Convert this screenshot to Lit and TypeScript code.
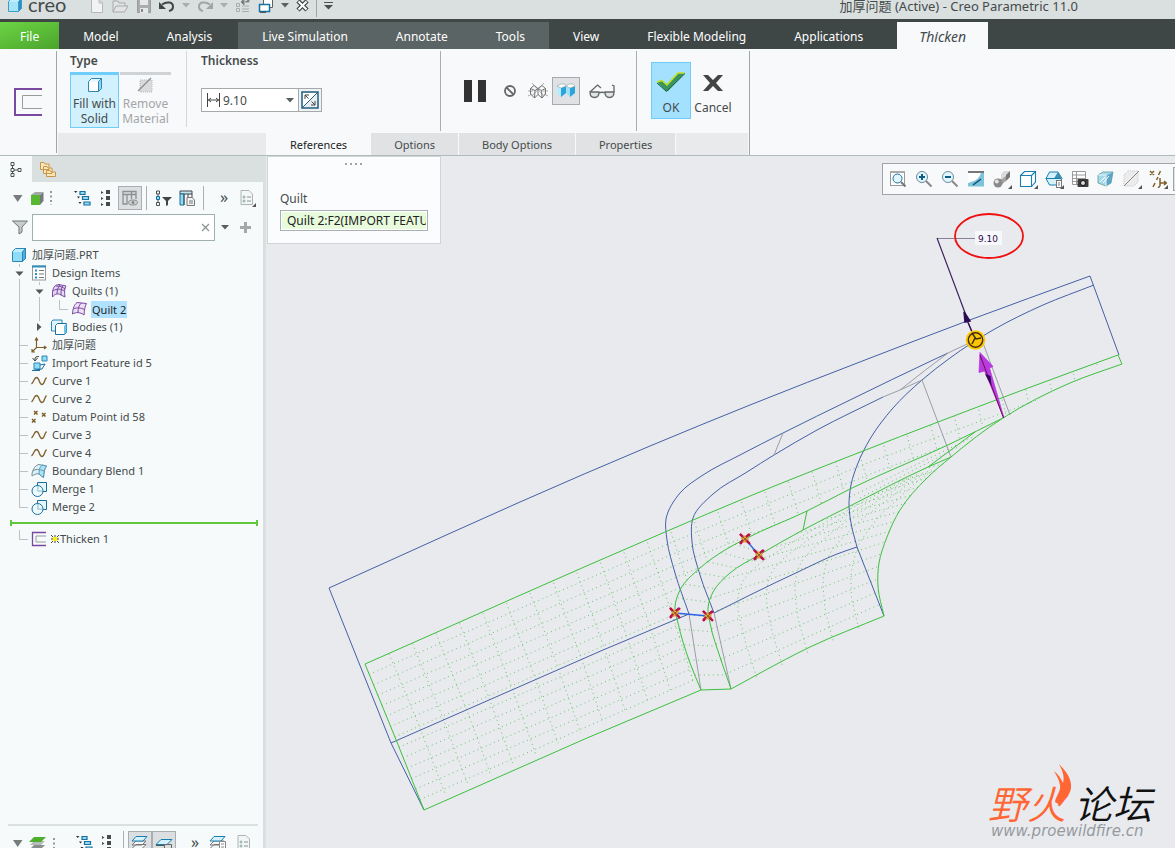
import { LitElement, html, svg, css } from "lit";
import { customElement } from "lit/decorators.js";

type Pt = [number, number];

/* ---------- geometry helpers ---------- */

const f1 = (n: number) => n.toFixed(1);

const gap = (a: Pt, b: Pt) => Math.hypot(a[0] - b[0], a[1] - b[1]);

// Spline whose tangents are weighted by segment length, so uneven spacing stays smooth.
const smooth = (pts: Pt[]): string => {
  const n = pts.length;
  const tan = pts.map((p, i): Pt => {
    const a = pts[Math.max(i - 1, 0)];
    const b = pts[Math.min(i + 1, n - 1)];
    const da = gap(a, p), db = gap(p, b);
    if (!da) return [(b[0] - p[0]) / db, (b[1] - p[1]) / db];
    if (!db) return [(p[0] - a[0]) / da, (p[1] - a[1]) / da];
    const w = db / (da + db);
    return [
      ((p[0] - a[0]) / da) * w + ((b[0] - p[0]) / db) * (1 - w),
      ((p[1] - a[1]) / da) * w + ((b[1] - p[1]) / db) * (1 - w),
    ];
  });
  let d = `M${pts[0][0]} ${pts[0][1]}`;
  for (let i = 0; i < n - 1; i++) {
    const p = pts[i], q = pts[i + 1];
    const k = gap(p, q) / 3;
    d += `C${f1(p[0] + tan[i][0] * k)} ${f1(p[1] + tan[i][1] * k)} ${f1(q[0] - tan[i + 1][0] * k)} ${f1(q[1] - tan[i + 1][1] * k)} ${f1(q[0])} ${f1(q[1])}`;
  }
  return d;
};

const along = (pts: Pt[], t: number): Pt => {
  const len = pts.slice(1).map((p, i) => gap(p, pts[i]));
  let rest = len.reduce((a, b) => a + b, 0) * t;
  for (let i = 0; i < len.length; i++) {
    if (rest <= len[i] || i === len.length - 1) {
      const k = Math.min(rest / len[i], 1);
      return [pts[i][0] + (pts[i + 1][0] - pts[i][0]) * k, pts[i][1] + (pts[i + 1][1] - pts[i][1]) * k];
    }
    rest -= len[i];
  }
  return pts[pts.length - 1];
};

const mix = (a: Pt, b: Pt, t: number): Pt => [a[0] + (b[0] - a[0]) * t, a[1] + (b[1] - a[1]) * t];

/* ---------- model curves ---------- */

const solidTop: Pt[] = [[329, 588], [380, 565], [520, 502], [650, 446], [750, 405], [865, 360], [967, 321], [1090, 276]];
const solidFront: Pt[] = [[1094, 285], [1043, 305], [993, 330], [950, 358], [922, 380], [893, 408], [870, 439], [858, 463], [851, 485], [849, 507], [851, 523], [857, 547]];
const ribOuter: Pt[] = [[689, 614], [675, 573], [667, 540], [666, 519], [680, 493], [703, 475], [740, 455], [783, 433], [850, 400], [933, 360], [948, 353]];
const ribInner: Pt[] = [[714, 613], [700, 575], [692, 542], [693, 518], [713, 494], [747, 472], [774, 455], [817, 430], [883, 397]];
const midRight: Pt[] = [[714, 613], [750, 595], [800, 571], [837, 554], [857, 547]];

const quiltTop: Pt[] = [[365, 664], [665, 532], [750, 496], [863, 451], [938, 422], [1020, 391], [1118, 355]];
const quiltEdge: Pt[] = [[884, 616], [878, 587], [879, 563], [887, 537], [900, 510], [927, 478], [951, 457], [1003, 418], [1070, 383], [1122, 364]];
const grooveA: Pt[] = [[701, 690], [690, 663], [678, 623], [675, 607], [680, 590], [700, 568], [725, 550], [745, 539], [807, 511], [850, 489], [950, 444], [1003, 418]];
const grooveB: Pt[] = [[731, 689], [721, 660], [710, 623], [708, 608], [713, 592], [730, 573], [759, 555], [803, 530], [850, 506], [928, 467], [951, 457]];
const quiltBottom: Pt[] = [[731, 689], [762, 672], [810, 647], [884, 616]];

/* ---------- dotted meshes ---------- */

const leftClip =
  "M365 664" + quiltTop.slice(1).map((p) => `L${p}`).join("") + "L1070 383 L1003 418" +
  [...grooveA].reverse().map((p) => `L${p}`).join("") + "L424 810Z";

const leftMesh = (): string => {
  let d = "";
  for (let k = 0; k < 32; k++) {
    const x = 389 + 23.5 * k;
    const lean = 56 - k * 0.9;
    d += `M${x} ${f1(664 - (x - 365) * 0.43)}l${f1(lean * 0.55)} 74l${f1(lean * 0.45)} 66`;
  }
  for (let r = 1; r < 14; r++) {
    const [x, y] = mix([365, 664], [424, 810], r / 14);
    d += `M${f1(x)} ${f1(y)}L${f1(x + 300)} ${f1(y - 131)}L${f1(x + 500)} ${f1(y - 212)}L${f1(x + 753)} ${f1(y - 306)}`;
  }
  return d;
};

const rightMesh = (): string => {
  const lA = grooveB.slice(0, 5), lB = grooveB.slice(4);
  const rA = quiltEdge.slice(0, 4), rB = quiltEdge.slice(3, 7);
  const at = (u: number, v: number): Pt => {
    const l = v < 0.4 ? along(lA, v / 0.4) : along(lB, (v - 0.4) / 0.6);
    const r = v < 0.4 ? along(rA, v / 0.4) : along(rB, (v - 0.4) / 0.6);
    return mix(l, r, u);
  };
  let d = "";
  for (let r = 1; r < 16; r++) {
    const a = at(0, r / 16), b = at(1, r / 16);
    d += `M${f1(a[0])} ${f1(a[1])}L${f1(b[0])} ${f1(b[1])}`;
  }
  for (let c = 1; c < 6; c++) {
    const pts: Pt[] = [];
    for (let v = 0; v <= 18; v++) pts.push(at(c / 6, v / 20));
    d += smooth(pts);
  }
  return d;
};

const grooveMesh = (): string => {
  let d = "";
  for (let i = 1; i < 12; i++) {
    const a = along(grooveA, i * 0.034), b = along(grooveB, i * 0.04);
    d += `M${f1(a[0])} ${f1(a[1])}L${f1(b[0])} ${f1(b[1])}`;
  }
  return d + "M850 497L975 436M860 498L960 446";
};

const marker = (x: number, y: number) => svg`<g>
  <path d="M${x - 5} ${y - 5}l10 10m0-10l-10 10" stroke="#b8104a" stroke-width="2.4"/>
  <rect x=${x - 3.5} y=${y - 3.5} width="7" height="7" fill="#e0a040"/>
  <path d="M${x - 5} ${y - 5}l3 3m6 6l-3-3m3-6l-3 3m-6 6l3-3" stroke="#b8104a" stroke-width="2"/>
  <path d="M${x - 2} ${y - 2}l4 4m0-4l-4 4" stroke="#8a6a20" stroke-width="1"/></g>`;

const drawing = html`<svg class="drawing" viewBox="266 156 909 692" preserveAspectRatio="xMinYMin meet" role="img" aria-label="Thicken preview of Quilt 2">
  <defs><clipPath id="left"><path d=${leftClip} /></clipPath></defs>
  <g class="mesh">
    <path clip-path="url(#left)" d=${leftMesh()} />
    <path d=${rightMesh()} />
    <path d=${grooveMesh()} />
  </g>
  <g class="blue">
    <path d=${smooth(solidTop)} />
    <path d="M1090 276L1119 355M329 588L391 743L424 810M391 743L603 650L689 614M857 547L884 616" />
    <path d=${smooth(solidFront)} />
    <path d=${smooth(ribOuter)} />
    <path d=${smooth(ribInner)} />
    <path d=${smooth(midRight)} />
  </g>
  <g class="gray">
    <path d="M783 433L774 455M883 397L900 390L922 380L951 457M900 390Q925 370 948 353L967 344M983 343L1010 415M689 614L701 690M714 613L731 689" />
  </g>
  <g class="green">
    <path d=${smooth(quiltTop)} />
    <path d="M1118 355L1122 364M365 664L397 742L424 810L587 738L701 690L731 689M807 511L803 530M928 467L975 432" />
    <path d=${smooth(quiltEdge)} />
    <path d=${smooth(grooveA)} />
    <path d=${smooth(grooveB)} />
    <path d=${smooth(quiltBottom)} />
  </g>
  <path d="M675 613L708 616M745 539L759 555" stroke="#2b62e8" stroke-width="1.4" />
  ${marker(745, 539)}${marker(759, 555)}${marker(675, 613)}${marker(708, 616)}
  <path d="M937 238.5H975" stroke="#8a809c" />
  <path d="M937 238L967 318" stroke="#3b1d5c" stroke-width="1.2" />
  <path d="M980 352.500L993 366.500L989.500 368L1004 418L984.500 371L979 372.500Z" fill="#b83ae0" stroke="#b83ae0" stroke-width=".8" />
  <path d="M980 355L1003.500 418" stroke="#6a0c50" />
  <path d="M985 374l5.500 2 1 10Z" fill="#2d0a55" />
  <path d="M964 312l6 9-5 1ZM967 320L975 339" fill="#2d0a55" stroke="#2d0a55" stroke-width="1.5" />
  <circle cx="975.5" cy="340" r="9.8" fill="#ffc400" />
  <circle cx="975.5" cy="340" r="7.2" fill="none" stroke="#3d3010" stroke-width="1.4" />
  <path d="M972 333l4 6 5-1M975 338l-3 6" fill="none" stroke="#3d3010" stroke-width="1.5" />
  <rect x="975" y="231" width="27" height="14" fill="#f7f8fb" />
  <text x="978" y="242" class="dim">9.10</text>
  <ellipse cx="989" cy="236" rx="34" ry="22" fill="none" stroke="#f01010" stroke-width="1.8" />
  <path d="M1059 764C1066 771 1072 779 1071 788C1070 797 1063 799 1060 805L1055 802C1056 795 1061 792 1060 785C1059 779 1056 775 1054 771C1059 775 1061 779 1063 783C1065 776 1062 770 1059 764Z" fill="#ff6633" />
  <text x="988" y="819" class="logo"><tspan class="hot">野火</tspan></text>
  <text x="1074" y="819" class="logo">论坛</text>
  <text x="991" y="836" class="site">www.proewildfire.cn</text>
</svg>`;

/* ---------- icons ---------- */

const ic = (w: number, h: number, body: unknown) =>
  html`<svg class="ic" width=${w} height=${h} viewBox="0 0 ${w} ${h}" fill="none" aria-hidden="true">${body}</svg>`;

const B = "#1a6f9c";
const L = "#8fdcf8";
const G = "#4a5050";

const cube = (top: string, front: string, side: string, line: string) => svg`
  <path d="M1.500 4.500L4.500 1.500H14.500V11.500L11.500 14.500H1.500Z" fill=${top} stroke=${line}/>
  <path d="M11.500 4.500L14.500 1.500V11.500L11.500 14.500Z" fill=${side} stroke=${line}/>
  <path d="M2 5H11V14H2Z" fill=${front}/>`;

const caret = (w = 8, c = "#5a6060") => ic(w, 5, svg`<path d="M0 0H${w}L${w / 2} 4.500Z" fill=${c}/>`);

const icons = {
  app: ic(16, 18, cube("#bdeeff", "#a8e4f8", "#2e8fc0", "#3d9cc8")),
  page: ic(14, 16, svg`<path d="M1.500 1.500H9L12.500 5V14.500H1.500Z" fill="#f2f4f4" stroke="#b4b8b8"/><path d="M9 1.500V5H12.500" stroke="#b4b8b8"/>`),
  open: ic(18, 16, svg`<path d="M2 14V3H7L8 5H14V8M2 14L5 8H17L13.500 14Z" fill="#e2e4e4" stroke="#a8abab"/>`),
  save: ic(16, 16, svg`<path d="M1.500 1.500H14.500V14.500H1.500Z" fill="#a9adad" stroke="#979b9b"/><path d="M4 1H12V7H4ZM4 10H12V15H4Z" fill="#e6e8e8"/><path d="M6 11V14" stroke="#888" stroke-width="2"/>`),
  undo: ic(16, 16, svg`<path d="M3 6.500C8 3 14 4 14 8.500C14 11 12.500 12.500 10 13" stroke="#3f4646" stroke-width="2"/><path d="M0 4V11H7Z" fill="#3f4646"/>`),
  redo: ic(16, 16, svg`<path d="M13 6.500C8 3 2 4 2 8.500C2 11 3.500 12.500 6 13" stroke="#a0a4a4" stroke-width="2"/><path d="M16 4V11H9Z" fill="#a0a4a4"/>`),
  regen: ic(16, 16, svg`<path d="M1.500 5.500h3v3h-3zM1.500 10.500h3v3h-3zM7 8h7M7 11h7M7 13.500h7" stroke="#a8acac"/><path d="M6 4l3-3v6z M14 1v3h-4" fill="#777" stroke="#888"/>`),
  windows: ic(16, 16, svg`<path d="M5.500 1.500H14.500V9.500H5.500Z" fill="#fff" stroke="#5b6262"/><path d="M1.500 6.500H11.500V13.500H1.500Z" fill="#fff" stroke="#1a6f9c" stroke-width="1.5"/><path d="M2 14.500H8" stroke="#555"/>`),
  close: ic(13, 13, svg`<path d="M2 2L11 11M11 2L2 11" stroke="#3f4646" stroke-width="4.5"/><path d="M2.500 2.500L10.500 10.500M10.500 2.500L2.500 10.500" stroke="#fff" stroke-width="2"/>`),
  more: ic(9, 8, svg`<path d="M0 .5H9" stroke=${G}/><path d="M0 3H9L4.500 7.500Z" fill=${G}/>`),
  thickenBig: ic(30, 30, svg`<path d="M29 2H2V28H29" stroke="#7a48a0" stroke-width="2"/><path d="M29 8.500H9.500V21.500H29" stroke="#9a9c9c"/>`),
  fill: ic(16, 16, cube("#e6f8ff", "#ffffff", "#8fd4f0", "#2e86b4")),
  remove: ic(17, 16, svg`<path d="M3 3H15V15H3Z" fill="#d9dbdc" stroke="#b5b8b8" stroke-dasharray="1 1"/><path d="M1 14L14 1" stroke="#8f9292" stroke-width="1.5"/>`),
  width: ic(15, 14, svg`<path d="M1.500 0V14M13.500 0V14M2 7H13M5 5L2.500 7L5 9M10 5L12.500 7L10 9" stroke="#444"/>`),
  flip: ic(18, 18, svg`<rect x="1" y="1" width="16" height="16" fill="#e6eef2" stroke="#1f5f80" stroke-width="1.5"/><path d="M2 2H16L2 16Z" fill="#fff"/><path d="M1 17L17 1" stroke="#1f5f80"/><path d="M4 8V4H8M4 4L7.500 7.500M14 10V14H10M14 14L10.500 10.500" stroke="#444"/>`),
  pause: ic(24, 22, svg`<path d="M1 0H9V22H1ZM15 0H23V22H15Z" fill="#333"/>`),
  none: ic(14, 14, svg`<circle cx="7" cy="7" r="5" stroke="#666" stroke-width="1.8"/><path d="M3.500 3.500L10.500 10.500" stroke="#666" stroke-width="1.8"/>`),
  wire: ic(20, 18, svg`<path d="M2.500 6.500L6 3.500L10 6.500L14 3.500L17.500 6.500V12L14 16L10 12.500L6.500 16L2.500 12ZM2.500 6.500L7 8.500L10 6.500L13.500 8.500L17.500 6.500M7 8.500L6.500 16M13.500 8.500L14 16M10 6.500V12.500" stroke="#666" stroke-width=".9"/><path d="M4 1L16 14M16 1L4 14M0 9H5M15 9H20M0 14L4 12M20 14L16 12" stroke="#888" stroke-width=".7"/>`),
  shade: ic(20, 18, svg`<path d="M1 4L5 6V15L1 11Z" fill="#b8ecff"/><path d="M5 6L10 4V11L5 15Z" fill="#29a4dc"/><path d="M10 4L14 6V15L10 11Z" fill="#9fe0f8"/><path d="M14 6L19 4V11L14 15Z" fill="#29a4dc"/><path d="M1 4L5 2H9L10 4L13 2H17L19 4L14 6L10 4L5 6Z" fill="#fff" stroke="#9aa" stroke-width=".7"/>`),
  glasses: ic(28, 18, svg`<path d="M2 10H11C11 14 9.500 15.500 6.500 15.500S2 14 2 10ZM17 10H26C26 14 24.500 15.500 21.500 15.500S17 14 17 10Z" fill="#dfe6ea" stroke="#666" stroke-width="1.3"/><path d="M11 11Q14 9.500 17 11M2 10L9.500 3L13 6M26 10V4L24 3" stroke="#666" stroke-width="1.3"/>`),
  ok: ic(30, 22, svg`<path d="M1 11L5 9L11 13L22 2H29L12 20H10Z" fill="#36965c"/><path d="M1 11L6 9.500L11 14L22 2H28.500" stroke="#c8e020" stroke-width="1.5"/><path d="M1 12L10.500 20.500L29 2.500" stroke="#1c5c38"/>`),
  cancel: ic(22, 20, svg`<path d="M1 2H6L11 7L16 2H21L14 10L21 18H16L11 13L6 18H1L8 10Z" fill="#444"/>`),
  treeTab: ic(14, 17, svg`<path d="M2 1.500h3v3h-3zM2 7.500h3v3h-3zM2 12.500h3v3h-3zM9 7.500h3v3h-3zM3.500 4.500v3M3.500 10.500v2M5 9h4" stroke=${G}/>`),
  folders: ic(18, 17, svg`<path d="M1.500 8.500V1.500H5L6 3H10V8.500ZM4.500 12.500V5.500H8L9 7H13V12.500ZM7.500 15.500V9.500H11L12 11H16.500V15.500Z" fill="#fbe6b8" stroke="#c8964a"/>`),
  green: ic(16, 16, svg`<path d="M2 5L6 2H14.500L11 5Z" fill="#a4a8a8"/><path d="M11 5L14.500 2V11L11 15Z" fill="#77797a"/><path d="M2 5H11V15H2Z" fill="#58b832"/>`),
  dots: ic(2, 16, svg`<path d="M1 1v14" stroke="#999" stroke-width="2" stroke-dasharray="2 2.5"/>`),
  outline: ic(17, 16, svg`<path d="M0 1h3.500L1.700 3zM3 6.500h3L4.500 8.500zM4.500 12h3L6 14z" fill="#333"/><path d="M6 1.500h5v3H6zM8.500 6.500h6v3h-6zM10 12h6v3h-6z" fill=${L} stroke=${B} stroke-width="1.2"/>`),
  list: ic(10, 16, svg`<path d="M5 0h4v4H5zM5 6h4v4H5zM5 12h4v4H5z" fill="#4a4a4a"/><path d="M0 1l2.500 1.500L0 4zM0 7l2.500 1.500L0 10zM0 13l2.500 1.500L0 16z" fill="#4a4a4a"/>`),
  tableEye: ic(16, 16, svg`<path d="M1 1.500H14V4.500H1ZM1 1V14H5V4.500M9.500 1V9M14 4V9" stroke="#8b9090" stroke-width="1.3"/><ellipse cx="11" cy="12.5" rx="4.5" ry="2.5" fill="#ccc" stroke="#8b9090"/><circle cx="11" cy="12.5" r="1.2" fill="#777"/>`),
  treeFilter: ic(17, 17, svg`<path d="M1.500 1h3v3h-3zM1.500 12.500h3v3h-3zM3 4v8" stroke=${G}/><path d="M1.500 6.500h3v3h-3z" fill=${L} stroke=${B}/><path d="M7 7H17L13 11V15L11 16V11Z" fill="#444"/>`),
  columns: ic(17, 16, svg`<path d="M1 1H13V4H1Z" fill="#bfe6f5" stroke="#444"/><path d="M1 4H5V15H1Z" fill=${L} stroke=${B}/><path d="M9 4V9M5 4V15M13 4V8" stroke="#444"/><path d="M8 7.500H13L15.500 10V15.500H8Z" fill="#f4f4f4" stroke="#777"/><path d="M10 11H14M10 13H14" stroke="#777"/>`),
  doc: ic(18, 18, svg`<path d="M2 1.500H10L13.500 5V15.500H2Z" fill="#f3f6f7" stroke="#aeb4b6"/><circle cx="5" cy="8" r="1" stroke="#8a9"/><circle cx="5" cy="12" r="1" stroke="#8a9"/><path d="M8 8h4M8 12h4" stroke="#8c9292"/><path d="M17 14V18H13Z" fill="#555"/>`),
  funnel: ic(16, 15, svg`<path d="M.5 1H15.500L10 7V12L7 14V7Z" fill="#c9cccc" stroke="#6f7575"/>`),
  clear: ic(9, 9, svg`<path d="M1 1L8 8M8 1L1 8" stroke="#8b9090" stroke-width="1.2"/>`),
  plus: ic(11, 11, svg`<path d="M5.500 0V11M0 5.500H11" stroke="#a4a8a8" stroke-width="3"/>`),
  triangle: ic(10, 7, svg`<path d="M0 0H9.500L4.700 7Z" fill="#777c7c"/>`),
  // model tree
  part: ic(16, 16, cube("#bdeeff", "#8fdcf8", "#4ab0dc", "#2e86b4")),
  design: ic(16, 16, svg`<rect x="1.5" y="1" width="13" height="14" fill="#fff" stroke="#999"/><path d="M1 1.500H15" stroke="#2a8fbd" stroke-width="2"/><path d="M4 4.500h2v2H4zM4 8h2v2H4zM4 11.500h2v2H4z" fill="#1c96cc"/><path d="M8 5.500h5M8 9h5M8 12.500h5" stroke="#777"/>`),
  quilts: ic(17, 16, svg`<path d="M1.500 10C1.500 5 4 1.500 8 1.500L15 3C13 6 13.500 9 14 14L9 11.500C7 10.500 4 10.500 1.500 14Z" fill="#e5d8f2" stroke="#7a48a0"/><path d="M2 8C6 5 10 6 13.500 8M5 3C9 3 11 4 14.500 6M6 11C6 7 7 4 9 2M10 12C10 8 10 5 12 2.500" stroke="#7a48a0"/>`),
  quilt: ic(17, 16, svg`<path d="M1.500 13C2 7 3 4 6 1.500L15.500 2.500C13.500 6 13.500 9 13 14C9 11 5 11 1.500 13Z" fill="#ecdff7" stroke="#7a48a0"/><path d="M2.500 8C6 6 10 7 13.500 8.500M7 11.500C7 7 8 4 10.500 2" stroke="#7a48a0"/>`),
  bodies: ic(18, 16, svg`<path d="M1.500 2.500L3 1H12V10L10 12H1.500Z" fill="#dff5fd" stroke="#2e86b4"/><path d="M5.500 6.500L7.500 4.500H16.500V13L14.500 15.500H5.500Z" fill="#fff" stroke="#1a6f9c"/><path d="M14 7L16.500 4.500V13L14 15.500Z" fill="#6cc4e8"/>`),
  csys: ic(16, 16, svg`<path d="M5.500 1V10.500H15M5.500 10.500L1.500 14.500M4 3.500L5.500 1L7 3.500M13 9L15 10.500L13 12M1 12V15H4" stroke="#80602a" stroke-width="1.2"/>`),
  imp: ic(17, 17, svg`<path d="M4 6V3Q4 1.500 8 1.500M1.500 3l2.500 3 2.500-3" stroke="#444"/><path d="M11 1h5v5h-5zM3 8h6v6H3z" fill="#8fdcf8" stroke="#2e86b4"/><path d="M9 10L14 9L11 14L1 15.500H9" stroke="#1a6f9c"/>`),
  curve: ic(16, 10, svg`<path d="M.5 8C3 6 3 1.500 5.500 1.500C8.500 1.500 8 8.500 11 8.500C13.500 8.500 13 4 15.500 1.500" stroke="#80602a" stroke-width="1.3"/>`),
  points: ic(16, 14, svg`<path d="M3 1l3.500 3.500m0-3.500l-3.500 3.500M11 3l3.500 3.500m0-3.500l-3.500 3.500M1 9l3.500 3.500m0-3.500l-3.500 3.500" stroke="#80602a" stroke-width="1.5"/>`),
  blend: ic(17, 16, svg`<path d="M1 11C2 5 5 2 8 1.500L15.500 3C13 6 13 10 12.500 14.500L8 11C5 10 3 12 1 13Z" fill="#d8f3fd" stroke="#7d8c92"/><path d="M8 11C8 6 9 4 11 2L15.500 3C13 6 13 10 12.500 14.500Z" fill="#a8e4f8" stroke="#5596b4"/><path d="M2 8C6 5 10 7 13 8" stroke="#7d8c92"/>`),
  merge: ic(17, 17, svg`<path d="M6.500 1.500H15.500V10.500H6.500Z" fill="#e4f6fd" stroke="#1a6f9c"/><circle cx="6.500" cy="10" r="5.500" fill="#eefaff" fill-opacity=".8" stroke="#1a6f9c"/><path d="M7 5V10H11.500" stroke="#9cc"/>`),
  thicken: ic(16, 16, svg`<path d="M15 1.500H1.500V14.500H15" stroke="#7a48a0" stroke-width="1.3"/><path d="M15 5H5V11H15" stroke="#9a9c9c"/>`),
  star: ic(8, 8, svg`<path d="M0 0L8 8M8 0L0 8M4 0V8M0 4H8" stroke="#444"/><rect x="2" y="2" width="4" height="4" fill="#ffee00"/>`),
  layersGreen: ic(17, 14, svg`<path d="M1 13L5 9H16L12 13Z" fill="#8a8e8e"/><path d="M1 9L5 5H16L12 9Z" fill="#b6baba"/><path d="M0 6L5 1H17L12 6Z" fill="#4db02c"/>`),
  layers: ic(18, 16, svg`<path d="M1 13.500L5 9.500H15L11 13.500ZM1 10L5 6H15L11 10Z" fill="#f4f6f6" stroke="#777"/><path d="M1 6L5 1.500H16L12 6Z" fill="#d4f1fc" stroke="#1a7fae"/>`),
  layerItem: ic(18, 16, svg`<path d="M1 9.500L6 4.500H17L12 9.500Z" fill="#d4f1fc" stroke="#1a7fae"/><path d="M1 10.500H11" stroke="#555"/><path d="M9.500 9.500H16.500V15.500H9.500Z" fill="#ddd" stroke="#666"/>`),
  layerDoc: ic(18, 16, svg`<path d="M1 13.500L5 9.500H15L11 13.500ZM1 10L5 6H15L11 10Z" fill="#f4f6f6" stroke="#777"/><path d="M1 6L5 1.500H16L12 6Z" fill="#d4f1fc" stroke="#1a7fae"/><path d="M10.500 6.500H16.500V15.500H10.500Z" fill="#fff" stroke="#888"/><path d="M12 9h3M12 12h3" stroke="#888"/>`),
  // graphics toolbar
  zoomFit: ic(18, 18, svg`<rect x="1.5" y="1.5" width="14" height="14" fill="#fff" stroke="#999"/><path d="M1 2h15" stroke="#aaa" stroke-width="2"/><circle cx="8.5" cy="8.5" r="4.5" fill="#e2f6fd" stroke="#1a6f9c"/><path d="M12 12L16.500 16.500" stroke="#777" stroke-width="2"/>`),
  zoomIn: ic(18, 18, svg`<circle cx="7" cy="7" r="5.5" fill="#e2f6fd" stroke="#6b8a98"/><path d="M4 7h6M7 4v6" stroke="#0c5d8a" stroke-width="2"/><path d="M11 11L16.500 16.500" stroke="#888" stroke-width="2"/>`),
  zoomOut: ic(18, 18, svg`<circle cx="7" cy="7" r="5.5" fill="#e2f6fd" stroke="#6b8a98"/><path d="M4 7h6" stroke="#0c5d8a" stroke-width="2"/><path d="M11 11L16.500 16.500" stroke="#888" stroke-width="2"/>`),
  repaint: ic(18, 18, svg`<rect x="1" y="1.5" width="16" height="15" fill="#7cc4dc"/><path d="M1 3H14Q12 10 4 12L1 13Z" fill="#fff"/><path d="M1 2H17" stroke="#777" stroke-width="2"/><path d="M14 9L6 15" stroke="#124e6e" stroke-width="1.5"/>`),
  render: ic(20, 18, svg`<path d="M9 4L12 1H18V7L15 10H9Z" fill="#dcdcdc"/><path d="M14 5L18 1V7L14 11Z" fill="#777"/><path d="M3 9H10L14 6V11L9 15Z" fill="#a4a4a4"/><circle cx="6" cy="13" r="4.5" fill="#8a8a8a"/><circle cx="4.800" cy="11.500" r="2" fill="#e4e4e4"/>`),
  style: ic(18, 18, svg`<path d="M1.500 5.500L5.500 1.500H16.500V12L12.500 16.500H1.500ZM1.500 5.500H12.500V16.500M12.500 5.500L16.500 1.500" fill="#fff" stroke="#1a7fae" stroke-width="1.1"/>`),
  views: ic(18, 18, svg`<path d="M1 8.500L4.500 2H13L17 8.500L13 15H4.500Z" fill="#d4f1fc" stroke="#1a7fae"/><path d="M9 8.500L13 2L17 8.500Z" fill="#3f8fb0"/><path d="M1 8.500H16" stroke="#1a7fae"/><rect x="11.500" y="10.500" width="5" height="7" fill="#fff" stroke="#777"/><path d="M13 13h2M13 15h2" stroke="#777"/>`),
  camera: ic(18, 18, svg`<path d="M1.500 1.500H14.500V14.500H1.500ZM1.500 5h13M1.500 8.500h13M1.500 11.500h13M5.500 1.500v13" fill="#fff" stroke="#999"/><rect x="6.500" y="9" width="11" height="8" rx="1" fill="#3c3c3c"/><circle cx="12" cy="13" r="2.5" fill="#ddd" stroke="#111"/>`),
  section: ic(18, 18, svg`<path d="M1 5L6 2H16L14 13L9 16L1 13Z" fill="#a5d8ea" stroke="#7aa"/><path d="M9 6L16 2L14 13L9 16Z" fill="#5aa6c4"/><path d="M1 5H9V16" stroke="#e6f6fb"/><path d="M3 12L8 7M6 13L12 6" stroke="#fff"/>`),
  annot: ic(18, 18, svg`<path d="M1 5L5 1H15V12L11 16H1Z" fill="#ececec" stroke="#c4c4c4" stroke-dasharray="1 1"/><path d="M1 16L16 1" stroke="#888"/>`),
  datum: ic(18, 18, svg`<path d="M1 1l4 4m0-4l-4 4M9.500 5l2-4M4 17l2-4M7.500 10l1.500-3M11 8v8M11 13h6.500M15 11l2.500 2-2.500 2M11 16l-2 2" stroke="#80602a" stroke-width="1.5"/>`),
};

/* ---------- data ---------- */

type Node = { label: string; icon: unknown; guides: string[]; selected?: boolean };

const tree: Node[] = [
  { label: "加厚问题.PRT", icon: icons.part, guides: [] },
  { label: "Design Items", icon: icons.design, guides: ["open"] },
  { label: "Quilts (1)", icon: icons.quilts, guides: ["pass", "open"] },
  { label: "Quilt 2", icon: icons.quilt, guides: ["pass", "pass", "end"], selected: true },
  { label: "Bodies (1)", icon: icons.bodies, guides: ["pass", "shut"] },
  { label: "加厚问题", icon: icons.csys, guides: ["tee"] },
  { label: "Import Feature id 5", icon: icons.imp, guides: ["tee"] },
  { label: "Curve 1", icon: icons.curve, guides: ["tee"] },
  { label: "Curve 2", icon: icons.curve, guides: ["tee"] },
  { label: "Datum Point id 58", icon: icons.points, guides: ["tee"] },
  { label: "Curve 3", icon: icons.curve, guides: ["tee"] },
  { label: "Curve 4", icon: icons.curve, guides: ["tee"] },
  { label: "Boundary Blend 1", icon: icons.blend, guides: ["tee"] },
  { label: "Merge 1", icon: icons.merge, guides: ["tee"] },
  { label: "Merge 2", icon: icons.merge, guides: ["end"] },
];

const guidePath: Record<string, string> = {
  pass: "M9.500 0V18",
  tee: "M9.500 0V18M9.500 9.500H18",
  end: "M9.500 0V9.500H18",
  open: "M9.500 0V3M9.500 15V18",
  shut: "M9.500 0V3",
};

const guide = (kind: string) => html`<svg class="ic" width="20" height="18" viewBox="0 0 20 18" fill="none" aria-hidden="true">
  <path d=${guidePath[kind]} stroke="#bcc2c2" />
  ${kind === "open" ? svg`<path d="M5.500 7.500H13.500L9.500 12Z" fill="#555"/>` : ""}
  ${kind === "shut" ? svg`<path d="M7 5V13L11.500 9Z" fill="#555"/>` : ""}
</svg>`;

@customElement("app-root")
export class AppRoot extends LitElement {
  static styles = css`
    :host {
      display: flex;
      flex-direction: column;
      height: 100vh;
      overflow: hidden;
      font-family: "Noto Sans", "Noto Sans CJK SC", sans-serif;
      font-size: 12px;
      line-height: 16px;
      color: #454b4b;
      background: #e8eaee;
    }
    * { box-sizing: border-box; }
    button {
      font: inherit;
      color: inherit;
      background: none;
      border: 0;
      padding: 0;
      margin: 0;
      display: flex;
      align-items: center;
      justify-content: center;
      flex: none;
    }
    .ic { display: block; flex: none; }

    .title {
      display: flex;
      align-items: center;
      height: 19px;
      padding: 0 97px 8px 7px;
      background: #dadfdf;
      overflow: hidden;
      flex: none;
    }
    .brand { font-family: Lato, sans-serif; font-size: 20px; line-height: 20px; margin: 0 20px 4px 5px; width: 42px; }
    .quick { display: flex; align-items: center; gap: 7px; }
    .quick .bar { width: 1px; height: 22px; background: #a0a6a6; }
    .title .name { margin-left: auto; white-space: nowrap; font-size: 13px; }

    .tabs {
      display: flex;
      padding-top: 3px;
      background: #3e4646;
      color: #fff;
      flex: none;
      height: 30px;
    }
    .tabs button { padding: 2px 24px 0; height: 27px; }
    .tabs .file { padding: 2px 20px 0; background: linear-gradient(160deg, #6cd444, #4ba42c); }
    .tabs .pale { background: #5b6464; }
    .tabs .spaced { margin-right: 2px; }
    .tabs .active { margin-left: 10px; padding: 2px 22px 0; font-style: italic; font-size: 14px; background: #f8f9fb; color: #454b4b; }

    .ribbon {
      display: flex;
      height: 107px;
      flex: none;
      background: #f8f9fb;
      border-bottom: 1px solid #b0baba;
    }
    .badge { width: 57px; display: flex; align-items: center; justify-content: center; border-right: 1px solid #9fa6a8; margin: 2px 0; }
    .body { display: flex; flex-direction: column; border-right: 1px solid #9fa6a8; margin: 2px 0 0 1px; width: 692px; }
    .groups { display: flex; height: 82px; }
    .group { display: flex; flex-direction: column; padding: 2px 0 0 12px; border-right: 1px solid #a8aeb0; margin-bottom: 2px; }
    .type { width: 129px; border-color: #d5d8da; margin-bottom: 6px; }
    .thick { width: 254px; padding-left: 14px; }
    h2 { font-size: 12px; line-height: 16px; margin: 0; font-weight: 600; }
    .choices { display: flex; margin-top: 3px; gap: 1px; }
    .choice { flex-direction: column; justify-content: flex-start; width: 49px; height: 56px; line-height: 15px; border-top: 3px solid #d0d3d5; padding-top: 2px; gap: 3px; }
    .choice.on { background: #d2f1fe; border: 1px solid #70cdfa; border-top-width: 3px; }
    .choice.off { width: 51px; color: #a3a6a8; }
    .field { display: flex; width: 121px; height: 24px; margin-top: 19px; border: 1px solid #a4a9ab; background: #fff; align-items: center; padding-left: 4px; }
    .field input { border: 0; padding: 0; flex: 1; min-width: 0; height: 20px; margin-left: 2px; font: inherit; color: inherit; outline: 0; }
    .field .swap { border-left: 1px solid #a4a9ab; width: 23px; height: 22px; background: #f0f2f3; }
    .field .drop { width: 16px; height: 20px; }
    .tools { flex-direction: row; width: 196px; align-items: center; padding: 0 0 0 19px; }
    .tools .pz { width: 30px; margin-right: 6px; }
    .tools .t { width: 28px; height: 28px; }
    .tools .wide { width: 44px; }
    .tools .press { background: #dfe1e4; border: 1px solid #a8abae; }
    .confirm { flex-direction: row; border: 0; padding: 11px 0 0 14px; gap: 2px; }
    .confirm button { flex-direction: column; width: 40px; height: 57px; padding: 11px 0 3px; justify-content: space-between; }
    .confirm .ok { background: #a3e1ff; border: 1px solid #70cdfa; padding: 8px 0 2px; }
    .subtabs { display: flex; gap: 1px; height: 22px; margin-right: 1px; background: #f8f9fb; font-size: 11px; }
    .subtabs button { background: #e0e2e4; height: 22px; padding: 2px 23px 0; }
    .subtabs .lead { background: #e9eaec; width: 208px; }
    .subtabs .cur { background: #f8f9fb; color: #1b1f1f; }
    .subtabs .fill { background: #e9eaec; flex: 1; }

    main { flex: 1; display: flex; min-height: 0; }
    aside { width: 266px; flex: none; display: flex; flex-direction: column; background: #f6fafb; border-right: 3px solid #dadfe0; overflow: hidden; }
    .sidetabs { display: flex; height: 26px; background: #dadfdf; flex: none; }
    .sidetabs button { width: 32px; height: 26px; }
    .sidetabs .cur { background: #f6fafb; }
    .strip { display: flex; align-items: center; height: 32px; padding-left: 7px; flex: none; }
    .strip .b { width: 24px; height: 24px; }
    .strip .tri { width: 22px; }
    .strip .cube { width: 16px; }
    .strip .grip { width: 12px; margin-right: 13px; display: flex; justify-content: center; }
    .strip .on { background: #dcdfe1; border: 1px solid #aaaeb0; }
    .strip .bar { width: 1px; height: 24px; background: #aab0b0; margin: 0 4px; }
    .strip .chev { margin-left: 4px; font-size: 16px; padding-bottom: 3px; }
    .filter { display: flex; align-items: center; height: 27px; padding-left: 12px; flex: none; }
    .box { display: flex; align-items: center; width: 183px; height: 27px; margin: 0 6px 0 4px; background: #fff; border: 1px solid #9fb0b0; }
    .box input { flex: 1; min-width: 0; height: 24px; border: 0; padding: 0 6px; font: inherit; outline: 0; background: none; }
    .box button { width: 18px; height: 20px; }
    .filter .gap { margin-right: 11px; }
    ul { list-style: none; margin: 5px 0 0; padding: 0 0 0 10px; font-size: 11px; line-height: 18px; }
    li { display: flex; align-items: center; height: 18px; gap: 0; }
    li .pic { width: 18px; display: flex; justify-content: center; margin-right: 3px; }
    li .txt { padding: 0 1px; white-space: nowrap; }
    li .sel { background: #b0e2ff; color: #1f2626; line-height: 17px; }
    .insert { height: 6px; margin: 4px 5px 0 10px; flex: none; border: solid #5fc83c; border-width: 0 2px; display: flex; align-items: center; }
    .insert i { flex: 1; height: 2px; background: #5fc83c; }
    .pending { margin-top: 4px; flex: 1; }
    .split { height: 2px; background: #dadfdf; margin: 0 5px 0 8px; flex: none; }
    .lower { height: 22px; align-items: flex-start; padding-top: 5px; overflow: hidden; }
    .lower .grip { margin: 0 12px 0 3px; padding-top: 6px; }
    .lower .bar { margin: 0 4px 0 6px; }
    .lower .chev { margin-left: 8px; width: 22px; }
    .lower .list { width: 21px; }
    .lower .end { margin-left: 3px; }

    .view { flex: 1; min-width: 0; position: relative; overflow: hidden; background: #e8eaee; }
    .drawing { display: block; width: 100%; }
    .blue path, .gray path, .green path, .mesh path { fill: none; stroke-width: 1; }
    .blue path { stroke: #4560a4; }
    .gray path { stroke: #9c9ea6; }
    .green path { stroke: #3cc03c; }
    .mesh path { stroke: #5cc05c; stroke-dasharray: 1 3.5; stroke-width: 0.9; }
    .dim { font: 9px "DejaVu Sans", sans-serif; fill: #2d0a4a; }
    .logo { font: italic 400 39px "Noto Sans CJK SC", sans-serif; font-weight: 350; fill: #111; }
    .hot { fill: #ff6633; }
    .site { font: italic 15px "DejaVu Sans", sans-serif; fill: #969a9e; }

    .panel { position: absolute; left: 1px; top: 0; width: 174px; height: 88px; background: #fbfcfd; border: 1px solid #cfd4d6; padding: 6px 12px; display: flex; flex-direction: column; }
    .panel .handle { align-self: center; }
    .panel label { margin: 26px 0 3px; }
    .panel input { width: 148px; height: 21px; border: 1px solid #aab0b2; background: #e8fbdc; box-shadow: inset 0 0 0 1px #fff; padding: 0 1px 0 6px; font: inherit; color: #222; outline: 0; }

    .viewbar { position: absolute; right: -6px; top: 7px; display: flex; align-items: center; width: 299px; height: 32px; padding-left: 2px; background: #f8f9fb; border: 1px solid #a0a4a6; }
    .viewbar button { width: 26px; height: 30px; position: relative; }
    .viewbar .menu::after { content: ""; position: absolute; right: 3px; bottom: 5px; border: 2px solid #555; border-top-color: transparent; border-left-color: transparent; }
    .viewbar .end { width: 12px; height: 24px; margin-left: 2px; border: 1px solid #a0a4a6; background: #e0e2e4; }
  `;

  render() {
    return html`
      <header class="title">
        ${icons.app}<span class="brand">creo</span>
        <div class="quick">
          <button aria-label="New">${icons.page}</button>
          <button aria-label="Open">${icons.open}</button>
          <button aria-label="Save">${icons.save}</button>
          <button aria-label="Undo">${icons.undo}</button>
          <button aria-label="Undo list">${caret(8, "#a8adad")}</button>
          <button aria-label="Redo">${icons.redo}</button>
          <button aria-label="Redo list">${caret(8, "#a8adad")}</button>
          <button aria-label="Regenerate">${icons.regen}</button>
          <button aria-label="Windows">${icons.windows}</button>
          <button aria-label="Window list">${caret()}</button>
          <button aria-label="Close">${icons.close}</button>
          <span class="bar"></span>
          <button aria-label="Customize">${icons.more}</button>
        </div>
        <span class="name">加厚问题 (Active) - Creo Parametric 11.0</span>
      </header>

      <nav class="tabs">
        <button class="file">File</button>
        <button>Model</button>
        <button class="spaced">Analysis</button>
        <button class="pale">Live Simulation</button>
        <button class="pale">Annotate</button>
        <button class="pale">Tools</button>
        <button>View</button>
        <button>Flexible Modeling</button>
        <button>Applications</button>
        <button class="active">Thicken</button>
      </nav>

      <section class="ribbon">
        <div class="badge">${icons.thickenBig}</div>
        <div class="body">
          <div class="groups">
            <div class="group type">
              <h2>Type</h2>
              <div class="choices">
                <button class="choice on">${icons.fill}<span>Fill with<br />Solid</span></button>
                <button class="choice off">${icons.remove}<span>Remove<br />Material</span></button>
              </div>
            </div>
            <div class="group thick">
              <h2 id="thk">Thickness</h2>
              <div class="field">
                ${icons.width}
                <input aria-labelledby="thk" value="9.10" />
                <button class="drop" aria-label="Recent values">${caret()}</button>
                <button class="swap" aria-label="Flip side">${icons.flip}</button>
              </div>
            </div>
            <div class="group tools">
              <button class="pz" aria-label="Pause">${icons.pause}</button>
              <button class="t" aria-label="No preview">${icons.none}</button>
              <button class="t" aria-label="Wireframe preview">${icons.wire}</button>
              <button class="t press" aria-label="Attached preview">${icons.shade}</button>
              <button class="t wide" aria-label="Verify">${icons.glasses}</button>
            </div>
            <div class="group confirm">
              <button class="ok">${icons.ok}<span>OK</span></button>
              <button>${icons.cancel}<span>Cancel</span></button>
            </div>
          </div>
          <div class="subtabs">
            <span class="lead"></span>
            <button class="cur">References</button>
            <button>Options</button>
            <button>Body Options</button>
            <button>Properties</button>
            <span class="fill"></span>
          </div>
        </div>
      </section>

      <main>
        <aside>
          <div class="sidetabs">
            <button class="cur" aria-label="Model tree">${icons.treeTab}</button>
            <button aria-label="Folders">${icons.folders}</button>
          </div>
          <div class="strip">
            <button class="tri" aria-label="Collapse">${icons.triangle}</button>
            <button class="cube" aria-label="Model">${icons.green}</button>
            <span class="grip">${icons.dots}</span>
            <button class="b" aria-label="Expand">${icons.outline}</button>
            <button class="b" aria-label="List">${icons.list}</button>
            <button class="b on" aria-label="Show columns">${icons.tableEye}</button>
            <span class="bar"></span>
            <button class="b" aria-label="Tree filters">${icons.treeFilter}</button>
            <button class="b" aria-label="Tree columns">${icons.columns}</button>
            <span class="bar"></span>
            <button class="b chev" aria-label="More">»</button>
            <button class="b" aria-label="Settings">${icons.doc}</button>
          </div>
          <div class="filter">
            ${icons.funnel}
            <div class="box">
              <input type="text" aria-label="Search tree" />
              <button aria-label="Clear">${icons.clear}</button>
            </div>
            <button class="gap" aria-label="Search options">${caret()}</button>
            <button aria-label="Add">${icons.plus}</button>
          </div>
          <ul>
            ${tree.map(
              (n) => html`<li>
                ${n.guides.map(guide)}<span class="pic">${n.icon}</span><span class="txt ${n.selected ? "sel" : ""}">${n.label}</span>
              </li>`
            )}
          </ul>
          <div class="insert"><i></i></div>
          <ul class="pending">
            <li>${guide("end")}<span class="pic">${icons.thicken}</span>${icons.star}<span class="txt">Thicken 1</span></li>
          </ul>
          <div class="split"></div>
          <div class="strip lower">
            <button class="b tri" aria-label="Collapse">${icons.triangle}</button>
            <button class="b cube" aria-label="Layers">${icons.layersGreen}</button>
            <span class="grip">${icons.dots}</span>
            <button class="b" aria-label="Expand">${icons.outline}</button>
            <button class="b list" aria-label="List">${icons.list}</button>
            <span class="bar"></span>
            <button class="b on" aria-label="Show layers">${icons.layers}</button>
            <button class="b on" aria-label="Show items">${icons.layerItem}</button>
            <button class="b chev" aria-label="More">»</button>
            <button class="b" aria-label="Layer properties">${icons.layerDoc}</button>
            <button class="b end" aria-label="Settings">${icons.doc}</button>
          </div>
        </aside>

        <section class="view">
          ${drawing}
          <div class="panel">
            <span class="handle">${ic(18, 2, svg`<path d="M0 1h18" stroke="#a0a4a6" stroke-width="2" stroke-dasharray="2 3"/>`)}</span>
            <label for="quilt">Quilt</label>
            <input id="quilt" value="Quilt 2:F2(IMPORT FEATURE)" />
          </div>
          <div class="viewbar">
            <button aria-label="Refit">${icons.zoomFit}</button>
            <button aria-label="Zoom in">${icons.zoomIn}</button>
            <button aria-label="Zoom out">${icons.zoomOut}</button>
            <button aria-label="Repaint">${icons.repaint}</button>
            <button class="menu" aria-label="Rendering">${icons.render}</button>
            <button class="menu" aria-label="Display style">${icons.style}</button>
            <button class="menu" aria-label="Saved views">${icons.views}</button>
            <button aria-label="View manager">${icons.camera}</button>
            <button aria-label="Perspective">${icons.section}</button>
            <button class="menu" aria-label="Annotations">${icons.annot}</button>
            <button class="menu" aria-label="Datum display">${icons.datum}</button>
            <span class="end"></span>
          </div>
        </section>
      </main>
    `;
  }
}
